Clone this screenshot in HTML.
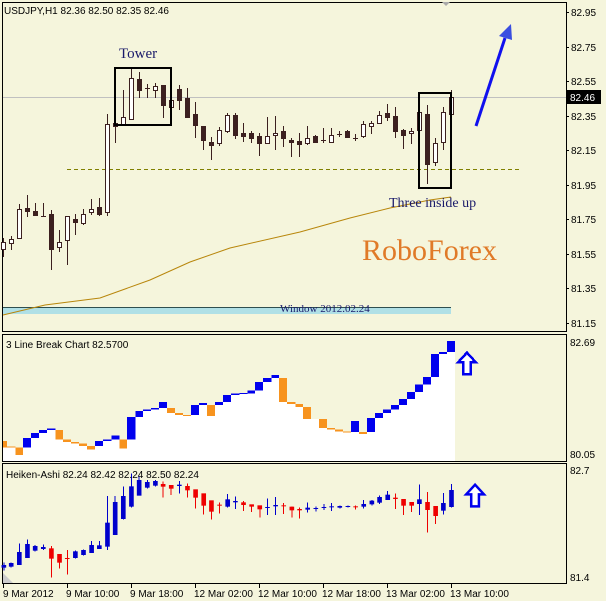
<!DOCTYPE html>
<html><head><meta charset="utf-8"><style>
html,body{margin:0;padding:0;background:#f5f5dc;width:606px;height:601px;overflow:hidden}
svg{display:block}
.ax{font-family:"Liberation Sans",sans-serif;font-size:10px;fill:#000}
</style></head><body>
<svg width="606" height="601" viewBox="0 0 606 601" xmlns="http://www.w3.org/2000/svg">
<rect width="606" height="601" fill="#f5f5dc"/>
<!-- MAIN PANEL -->
<rect x="2.5" y="2.5" width="564" height="329" fill="#f5f5dc" stroke="#000"/>
<polygon points="442,2 450,2 446,6" fill="#aaa"/>
<line x1="3" y1="97.5" x2="566" y2="97.5" stroke="#c0c0c0"/>
<line x1="67" y1="169.5" x2="520" y2="169.5" stroke="#808000" stroke-dasharray="4,3"/>
<rect x="3" y="307" width="448" height="7" fill="#b0e0e6"/>
<line x1="3" y1="307.5" x2="451" y2="307.5" stroke="#2f4f4f"/>
<polyline fill="none" stroke="#b8860b" points="3,315 45,305 100,298 150,280 190,262 230,248 300,232 350,218 390,208 430,200 451,197"/>
<text x="280" y="312" font-family="Liberation Serif,serif" font-size="11" fill="#1a1a6a">Window 2012.02.24</text>
<g stroke="#3c2020" stroke-width="1" shape-rendering="crispEdges">
<path d="M3.5 238V257M11.5 236V250M19.5 204V238M27.5 195V217M35.5 203V216M43.5 203V216M51.5 210V270M59.5 230V252M67.5 216V265M75.5 214V235M83.5 209V225M91.5 199V215M99.5 198V216M107.5 114V216M115.5 118V143M123.5 90V126M131.5 68V119M139.5 72V98M147.5 84V98M155.5 83V98M163.5 85V118M171.5 98V108M179.5 85V110M187.5 88V117M195.5 102V138M203.5 126V150M211.5 137V160M219.5 127V146M227.5 113V133M235.5 113V139M243.5 123V142M251.5 131V143M259.5 133V156M267.5 117V143M275.5 116V150M283.5 126V147M291.5 138V157M299.5 133V157M307.5 126V145M315.5 135V143M323.5 128V143M331.5 128V143M339.5 131V137M347.5 130V138M355.5 134V141M363.5 121V138M371.5 121V134M379.5 111V124M387.5 104V121M395.5 107V138M403.5 129V149M411.5 128V144M419.5 112V131M427.5 105V184M435.5 138V166M443.5 107V150M451.5 90V114"/>
<path d="M41 216.5H46M145 88.5H150M321 140.5H326M337 134.5H342M353 138.5H358" />
</g>
<g stroke="#3c2020" shape-rendering="crispEdges">
<g fill="#fff">
<rect x="1.5" y="242.5" width="4" height="7"/><rect x="9.5" y="239.5" width="4" height="4"/><rect x="17.5" y="209.5" width="4" height="29"/>
<rect x="57.5" y="242.5" width="4" height="5"/><rect x="65.5" y="216.5" width="4" height="24"/><rect x="81.5" y="214.5" width="4" height="9"/>
<rect x="89.5" y="209.5" width="4" height="3"/><rect x="105.5" y="124.5" width="4" height="88"/><rect x="121.5" y="117.5" width="4" height="7"/>
<rect x="129.5" y="78.5" width="4" height="41"/><rect x="153.5" y="86.5" width="4" height="4"/><rect x="169.5" y="100.5" width="4" height="7"/>
<rect x="217.5" y="130.5" width="4" height="13"/><rect x="225.5" y="115.5" width="4" height="16"/><rect x="265.5" y="136.5" width="4" height="7"/>
<rect x="273.5" y="133.5" width="4" height="2"/><rect x="305.5" y="138.5" width="4" height="5"/><rect x="329.5" y="135.5" width="4" height="7"/>
<rect x="361.5" y="124.5" width="4" height="12"/><rect x="369.5" y="123.5" width="4" height="3"/><rect x="377.5" y="115.5" width="4" height="8"/>
<rect x="409.5" y="131.5" width="4" height="2"/><rect x="417.5" y="112.5" width="4" height="18"/><rect x="433.5" y="143.5" width="4" height="19"/>
<rect x="441.5" y="112.5" width="4" height="30"/><rect x="449.5" y="97.5" width="4" height="17"/>
</g>
<g fill="#3c2020">
<rect x="25.5" y="208.5" width="4" height="3"/><rect x="33.5" y="211.5" width="4" height="4"/><rect x="49.5" y="214.5" width="4" height="35"/>
<rect x="73.5" y="219.5" width="4" height="3"/><rect x="97.5" y="207.5" width="4" height="7"/><rect x="113.5" y="123.5" width="4" height="3"/>
<rect x="137.5" y="79.5" width="4" height="11"/><rect x="161.5" y="85.5" width="4" height="20"/><rect x="177.5" y="89.5" width="4" height="11"/>
<rect x="185.5" y="98.5" width="4" height="19"/><rect x="193.5" y="114.5" width="4" height="11"/><rect x="201.5" y="126.5" width="4" height="14"/>
<rect x="209.5" y="142.5" width="4" height="3"/><rect x="233.5" y="115.5" width="4" height="20"/><rect x="241.5" y="133.5" width="4" height="3"/>
<rect x="249.5" y="133.5" width="4" height="5"/><rect x="257.5" y="136.5" width="4" height="7"/><rect x="281.5" y="131.5" width="4" height="7"/>
<rect x="289.5" y="140.5" width="4" height="2"/><rect x="297.5" y="141.5" width="4" height="3"/><rect x="313.5" y="136.5" width="4" height="6"/>
<rect x="345.5" y="131.5" width="4" height="6"/><rect x="385.5" y="113.5" width="4" height="4"/><rect x="393.5" y="116.5" width="4" height="15"/>
<rect x="401.5" y="130.5" width="4" height="5"/><rect x="425.5" y="114.5" width="4" height="50"/>
</g>
</g>
<rect x="115" y="68" width="56" height="57" fill="none" stroke="#000" stroke-width="2"/>
<rect x="419" y="93" width="32" height="95" fill="none" stroke="#000" stroke-width="2"/>
<text x="4" y="14" class="ax">USDJPY,H1  82.36 82.50 82.35 82.46</text>
<text x="119" y="58" font-family="Liberation Serif,serif" font-size="15" fill="#1a1a6a">Tower</text>
<text x="389" y="207" font-family="Liberation Serif,serif" font-size="14" fill="#1a1a6a">Three inside up</text>
<text x="362" y="260" font-family="Liberation Serif,serif" font-size="30" fill="#e07a28">RoboForex</text>
<line x1="476" y1="126" x2="505" y2="38" stroke="#1010ee" stroke-width="3"/>
<polygon points="511,24 499,36 512,40" fill="#3a4ee0"/>
<g class="ax">
<text x="571" y="16">82.95</text><text x="571" y="51">82.75</text><text x="571" y="85">82.55</text>
<text x="571" y="120">82.35</text><text x="571" y="154">82.15</text><text x="571" y="189">81.95</text>
<text x="571" y="223">81.75</text><text x="571" y="258">81.55</text><text x="571" y="292">81.35</text><text x="571" y="327">81.15</text>
</g>
<path d="M566 12.5h3M566 47.5h3M566 81.5h3M566 116.5h3M566 150.5h3M566 185.5h3M566 219.5h3M566 254.5h3M566 288.5h3M566 323.5h3" stroke="#000"/>
<rect x="567" y="90" width="34" height="14" fill="#000"/>
<text x="570" y="101" class="ax" style="fill:#fff">82.46</text>

<!-- PANEL 2 -->
<rect x="2.5" y="334.5" width="564" height="127" fill="#f5f5dc" stroke="#000"/>
<g transform="translate(0,330) scale(0.38655,0.33333)" shape-rendering="crispEdges">
<polygon fill="#fff" points="8,393 8,333 18,333 18,350 40,350 40,353 60,353 60,324 80,324 80,309 101,309 101,300 122,300 122,295 143,295 143,300 163,300 163,329 184,329 184,336 205,336 205,340 225,340 225,348 246,348 246,333 267,333 267,329 288,329 288,316 309,316 309,329 329,329 329,261 350,261 350,243 370,243 370,238 391,238 391,234 411,234 411,216 432,216 432,234 453,234 453,249 473,249 473,255 494,255 494,225 515,225 515,219 535,219 535,225 556,225 556,216 577,216 577,195 598,195 598,191 619,191 619,189 640,189 640,182 660,182 660,156 681,156 681,144 702,144 702,135 722,135 722,144 743,144 743,216 764,216 764,222 784,222 784,231 805,231 805,267 846,267 846,294 867,294 867,298 887,298 887,305 908,305 908,273 929,273 929,306 950,306 950,264 970,264 970,249 991,249 991,238 1012,238 1012,225 1032,225 1032,207 1053,207 1053,186 1074,186 1074,163 1094,163 1094,141 1115,141 1115,72 1136,72 1136,66 1157,66 1157,33 1177,33 1177,393"/>
<g fill="#f7931e">
<rect x="8" y="333" width="10" height="19"/><rect x="18" y="350" width="22" height="3"/><rect x="40" y="353" width="20" height="22"/>
<rect x="143" y="300" width="20" height="29"/><rect x="163" y="329" width="21" height="7"/><rect x="184" y="336" width="21" height="4"/>
<rect x="205" y="340" width="20" height="8"/><rect x="225" y="348" width="21" height="11"/><rect x="309" y="329" width="20" height="27"/>
<rect x="432" y="234" width="21" height="15"/><rect x="453" y="249" width="20" height="6"/><rect x="473" y="255" width="21" height="3"/>
<rect x="535" y="225" width="21" height="33"/><rect x="722" y="144" width="21" height="72"/><rect x="743" y="216" width="21" height="6"/>
<rect x="764" y="222" width="20" height="9"/><rect x="784" y="231" width="21" height="36"/><rect x="825" y="267" width="21" height="27"/>
<rect x="846" y="294" width="21" height="4"/><rect x="867" y="298" width="20" height="7"/><rect x="887" y="305" width="21" height="3"/><rect x="929" y="306" width="21" height="6"/>
</g>
<g fill="#0000ee">
<rect x="60" y="324" width="20" height="29"/><rect x="80" y="309" width="21" height="15"/><rect x="101" y="300" width="21" height="9"/><rect x="122" y="295" width="21" height="5"/>
<rect x="246" y="333" width="21" height="15"/><rect x="267" y="329" width="21" height="4"/><rect x="288" y="316" width="21" height="13"/>
<rect x="329" y="261" width="21" height="68"/><rect x="350" y="243" width="20" height="18"/><rect x="370" y="238" width="21" height="5"/><rect x="391" y="234" width="20" height="4"/><rect x="411" y="216" width="21" height="18"/>
<rect x="494" y="225" width="21" height="30"/><rect x="515" y="219" width="20" height="6"/><rect x="556" y="216" width="21" height="9"/><rect x="577" y="195" width="21" height="21"/>
<rect x="598" y="191" width="21" height="4"/><rect x="619" y="189" width="21" height="3"/><rect x="640" y="182" width="20" height="8"/><rect x="660" y="156" width="21" height="26"/>
<rect x="681" y="144" width="21" height="12"/><rect x="702" y="135" width="20" height="9"/><rect x="908" y="273" width="21" height="33"/>
<rect x="950" y="264" width="20" height="42"/><rect x="970" y="249" width="21" height="15"/><rect x="991" y="238" width="21" height="11"/><rect x="1012" y="225" width="20" height="13"/>
<rect x="1032" y="207" width="21" height="18"/><rect x="1053" y="186" width="21" height="21"/><rect x="1074" y="163" width="20" height="23"/><rect x="1094" y="141" width="21" height="22"/>
<rect x="1115" y="72" width="21" height="69"/><rect x="1136" y="66" width="21" height="6"/><rect x="1157" y="33" width="20" height="33"/>
</g>
<polygon points="1208,68 1231,97 1218,97 1218,133 1198,133 1198,97 1185,97" fill="#fff" stroke="#0000ee" stroke-width="2.5" vector-effect="non-scaling-stroke"/>
</g>
<text x="6" y="348" class="ax">3 Line Break Chart 82.5700</text>
<text x="570" y="346" class="ax">82.69</text><text x="570" y="458" class="ax">80.05</text>

<!-- PANEL 3 -->
<rect x="2.5" y="463.5" width="564" height="120" fill="#f5f5dc" stroke="#000"/>
<g transform="translate(0,330) scale(0.38655,0.33333)">
<g shape-rendering="crispEdges">
<path stroke="#0000cc" vector-effect="non-scaling-stroke" d="M10 697V722M29 697V712M50 640V705M71 628V684M91 645V664M112 643V660M195 662V686M216 658V677M237 633V669M257 633V657M278 498V660M298 498V615M319 470V569M340 430V532M360 440V497M381 450V475M402 450V470M464 453V490M589 492V533M609 500V537M692 505V555M713 501V555M796 518V548M817 530V544M838 522V540M858 519V543M879 526V536M900 527V533M941 510V535M962 510V527M982 497V522M1003 483V510M1085 463V555M1147 489V553M1168 462V533"/>
<path stroke="#ee0000" vector-effect="non-scaling-stroke" d="M133 648V743M154 672V716M174 660V733M422 455V503M443 465V495M485 460V503M506 478V535M527 490V553M547 511V569M568 518V550M630 513V543M651 523V546M672 526V563M734 519V552M755 530V563M775 532V565M920 526V539M1023 490V537M1044 507V555M1065 516V546M1106 486V608M1127 528V582"/>
</g>
<g fill="#0000cc">
<rect x="4" y="705" width="12" height="8"/><rect x="23" y="699" width="12" height="11"/><rect x="44" y="666" width="12" height="39"/><rect x="65" y="642" width="12" height="42"/>
<rect x="85" y="648" width="12" height="14"/><rect x="106" y="651" width="12" height="6"/><rect x="189" y="664" width="12" height="20"/><rect x="210" y="660" width="12" height="15"/>
<rect x="231" y="645" width="12" height="24"/><rect x="251" y="646" width="12" height="11"/><rect x="272" y="578" width="12" height="72"/><rect x="292" y="516" width="12" height="99"/>
<rect x="313" y="498" width="12" height="69"/><rect x="334" y="469" width="12" height="61"/><rect x="354" y="450" width="12" height="47"/><rect x="375" y="456" width="12" height="17"/>
<rect x="396" y="453" width="12" height="14"/><rect x="458" y="464" width="12" height="4"/><rect x="583" y="508" width="12" height="22"/><rect x="603" y="513" width="12" height="4"/>
<rect x="686" y="531" width="12" height="3"/><rect x="707" y="525" width="12" height="4"/><rect x="790" y="533" width="12" height="6"/><rect x="811" y="534" width="12" height="3"/>
<rect x="832" y="531" width="12" height="3"/><rect x="852" y="529" width="12" height="3"/><rect x="873" y="528" width="12" height="5"/><rect x="894" y="528" width="12" height="3"/>
<rect x="935" y="522" width="12" height="8"/><rect x="956" y="512" width="12" height="11"/><rect x="976" y="501" width="12" height="17"/><rect x="997" y="494" width="12" height="16"/>
<rect x="1079" y="508" width="12" height="14"/><rect x="1141" y="519" width="12" height="23"/><rect x="1162" y="480" width="12" height="51"/>
</g>
<g fill="#ee0000">
<rect x="127" y="655" width="12" height="31"/><rect x="148" y="672" width="12" height="26"/><rect x="168" y="684" width="12" height="3"/><rect x="416" y="462" width="12" height="8"/>
<rect x="437" y="465" width="12" height="11"/><rect x="479" y="468" width="12" height="13"/><rect x="500" y="478" width="12" height="25"/><rect x="521" y="490" width="12" height="37"/>
<rect x="541" y="511" width="12" height="34"/><rect x="562" y="524" width="12" height="3"/><rect x="624" y="517" width="12" height="8"/><rect x="645" y="523" width="12" height="7"/>
<rect x="666" y="526" width="12" height="12"/><rect x="728" y="526" width="12" height="3"/><rect x="749" y="530" width="12" height="11"/><rect x="769" y="537" width="12" height="4"/>
<rect x="914" y="529" width="12" height="3"/><rect x="1017" y="503" width="12" height="4"/><rect x="1038" y="507" width="12" height="20"/><rect x="1059" y="516" width="12" height="11"/>
<rect x="1100" y="516" width="12" height="24"/><rect x="1121" y="528" width="12" height="30"/>
</g>
<polygon points="1229,464 1252,493 1239,493 1239,529 1219,529 1219,493 1206,493" fill="#fff" stroke="#0000ee" stroke-width="2.5" vector-effect="non-scaling-stroke"/>
</g>
<polygon points="3,573 3,583 13,583" fill="#ccc"/>
<text x="6" y="478" class="ax">Heiken-Ashi 82.24 82.42 82.24 82.50 82.24</text>
<text x="570" y="474" class="ax">82.7</text><text x="570" y="581" class="ax">81.4</text>

<path d="M3.5 584v4M67.5 584v4M131.5 584v4M195.5 584v4M259.5 584v4M323.5 584v4M387.5 584v4M451.5 584v4" stroke="#000"/>
<g class="ax">
<text x="3" y="597">9 Mar 2012</text><text x="66" y="597">9 Mar 10:00</text><text x="130" y="597">9 Mar 18:00</text>
<text x="194" y="597">12 Mar 02:00</text><text x="258" y="597">12 Mar 10:00</text><text x="322" y="597">12 Mar 18:00</text>
<text x="386" y="597">13 Mar 02:00</text><text x="450" y="597">13 Mar 10:00</text>
</g>
</svg>
</body></html>
